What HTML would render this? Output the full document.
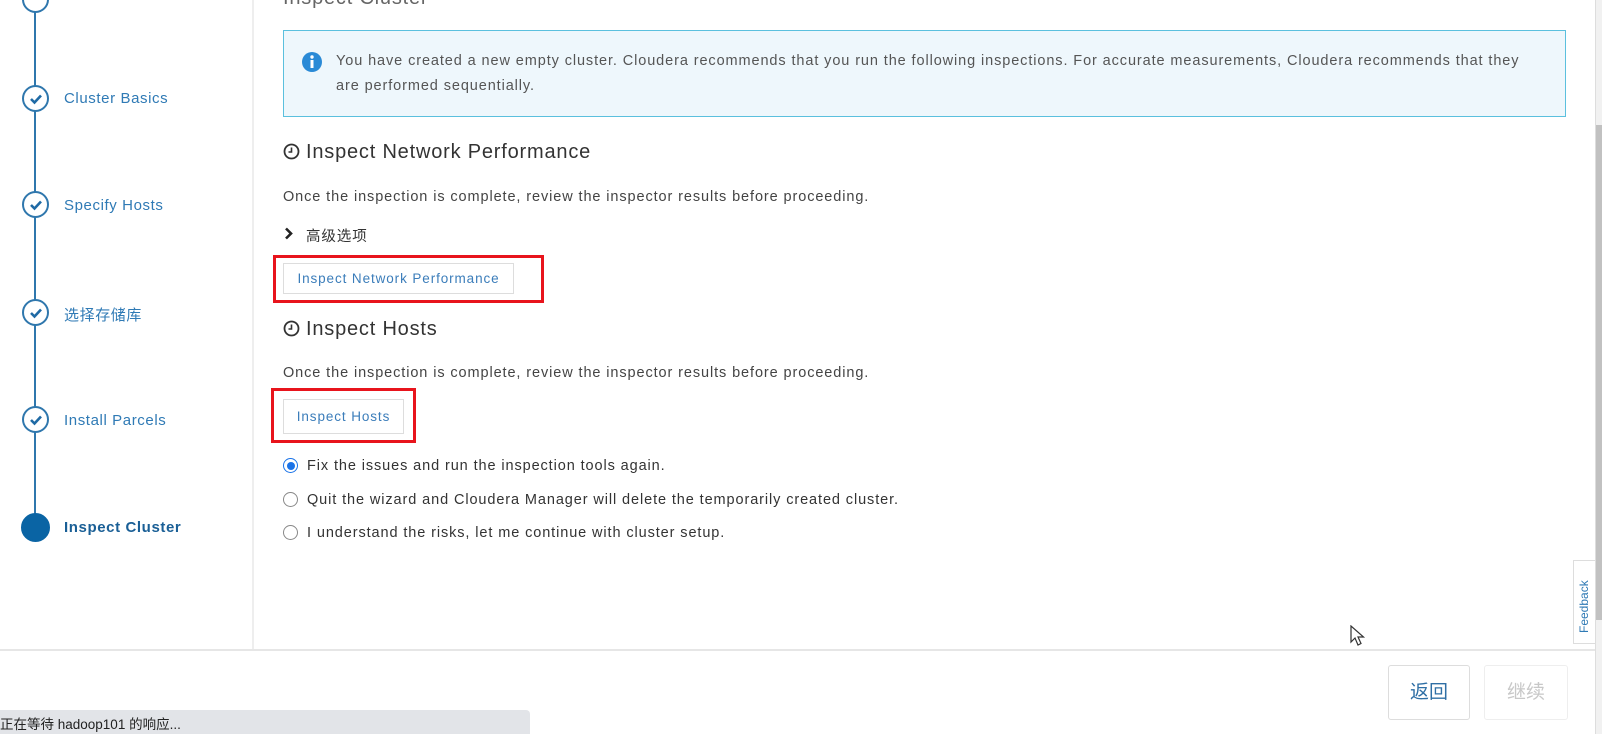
<!DOCTYPE html>
<html><head><meta charset="utf-8"><style>
*{margin:0;padding:0;box-sizing:border-box}
body{width:1602px;height:734px;overflow:hidden;background:#fff;font-family:"Liberation Sans","Noto Sans CJK SC",sans-serif;position:relative;color:#444}
.a{position:absolute;white-space:nowrap}
.line{position:absolute;left:34px;top:0;width:2px;height:527px;background:#2f77ad}
.c{position:absolute;left:22px;width:27px;height:27px;border-radius:50%;border:2px solid #2f77ad;background:#fff}
.c svg{position:absolute;left:5px;top:6px}
.lbl{position:absolute;left:64px;font-size:15px;color:#2f7ab5;letter-spacing:0.6px}
.btn{position:absolute;border:1px solid #ddd;background:#fff;color:#3b7dba;font-size:13.5px;text-align:center;letter-spacing:0.9px}
.red{position:absolute;border:3px solid #e8141c}
.p{font-size:14.5px;color:#444;letter-spacing:0.9px}
.h{font-size:20px;color:#333;letter-spacing:0.8px}
.radio{position:absolute;left:283px;width:15px;height:15px;border-radius:50%;border:1px solid #888;background:#fff}
</style></head><body>
<div class="line"></div>
<div class="c" style="top:-14px"></div>
<div class="c" style="top:85px"><svg width="14" height="12" viewBox="0 0 14 12"><path d="M2 6l3.5 3.5L12 2.5" stroke="#1f6aa5" stroke-width="2.6" fill="none"/></svg></div>
<div class="c" style="top:191px"><svg width="14" height="12" viewBox="0 0 14 12"><path d="M2 6l3.5 3.5L12 2.5" stroke="#1f6aa5" stroke-width="2.6" fill="none"/></svg></div>
<div class="c" style="top:299px"><svg width="14" height="12" viewBox="0 0 14 12"><path d="M2 6l3.5 3.5L12 2.5" stroke="#1f6aa5" stroke-width="2.6" fill="none"/></svg></div>
<div class="c" style="top:406px"><svg width="14" height="12" viewBox="0 0 14 12"><path d="M2 6l3.5 3.5L12 2.5" stroke="#1f6aa5" stroke-width="2.6" fill="none"/></svg></div>
<div class="c" style="top:513px;background:#0a64a4;border-color:#0a64a4;width:29px;height:29px;left:21px"></div>
<div class="lbl" style="top:90px">Cluster Basics</div>
<div class="lbl" style="top:197px">Specify Hosts</div>
<div class="lbl" style="top:304px">选择存储库</div>
<div class="lbl" style="top:412px">Install Parcels</div>
<div class="lbl" style="top:519px;font-weight:bold;color:#1a5f96">Inspect Cluster</div>
<div style="position:absolute;left:252px;top:0;width:2px;height:650px;background:#eee"></div>

<div class="a h" style="left:283px;top:-13px;color:#666">Inspect Cluster</div>
<div style="position:absolute;left:283px;top:30px;width:1283px;height:87px;background:#eef7fc;border:1px solid #5bc0de"></div>
<svg class="a" style="left:302px;top:52px" width="20" height="20" viewBox="0 0 20 20"><circle cx="10" cy="10" r="10" fill="#2a8ad6"/><rect x="8.5" y="8" width="3" height="8" fill="#fff"/><circle cx="10" cy="5" r="1.7" fill="#fff"/></svg>
<div class="a p" style="left:336px;top:53px;color:#555">You have created a new empty cluster. Cloudera recommends that you run the following inspections. For accurate measurements, Cloudera recommends that they</div>
<div class="a p" style="left:336px;top:78px;color:#555">are performed sequentially.</div>

<svg class="a" style="left:283px;top:143px" width="17" height="17" viewBox="0 0 17 17"><circle cx="8.5" cy="8.5" r="7" stroke="#333" stroke-width="1.8" fill="none"/><path d="M8.5 4.5v4.5H5.5" stroke="#333" stroke-width="1.6" fill="none"/></svg>
<div class="a h" style="left:306px;top:141px">Inspect Network Performance</div>
<div class="a p" style="left:283px;top:189px">Once the inspection is complete, review the inspector results before proceeding.</div>
<svg class="a" style="left:284px;top:227px" width="10" height="13" viewBox="0 0 10 13"><path d="M2 1.5l5 5-5 5" stroke="#222" stroke-width="2.6" fill="none"/></svg>
<div class="a p" style="left:306px;top:225px;color:#333">高级选项</div>
<div class="red" style="left:273px;top:255px;width:271px;height:48px"></div>
<div class="btn" style="left:283px;top:263px;width:231px;height:31px;line-height:29px">Inspect Network Performance</div>

<svg class="a" style="left:283px;top:320px" width="17" height="17" viewBox="0 0 17 17"><circle cx="8.5" cy="8.5" r="7" stroke="#333" stroke-width="1.8" fill="none"/><path d="M8.5 4.5v4.5H5.5" stroke="#333" stroke-width="1.6" fill="none"/></svg>
<div class="a h" style="left:306px;top:318px">Inspect Hosts</div>
<div class="a p" style="left:283px;top:365px">Once the inspection is complete, review the inspector results before proceeding.</div>
<div class="red" style="left:271px;top:388px;width:145px;height:55px"></div>
<div class="btn" style="left:283px;top:399px;width:121px;height:35px;line-height:33px">Inspect Hosts</div>

<div class="radio" style="top:458px;border:1px solid #1a73e8"><div style="position:absolute;left:2.5px;top:2.5px;width:8px;height:8px;border-radius:50%;background:#1a73e8"></div></div>
<div class="a p" style="left:307px;top:458px;color:#333">Fix the issues and run the inspection tools again.</div>
<div class="radio" style="top:492px"></div>
<div class="a p" style="left:307px;top:492px;color:#333">Quit the wizard and Cloudera Manager will delete the temporarily created cluster.</div>
<div class="radio" style="top:525px"></div>
<div class="a p" style="left:307px;top:525px;color:#333">I understand the risks, let me continue with cluster setup.</div>

<div style="position:absolute;left:0;top:649px;width:1595px;height:2px;background:#e6e6e6"></div>
<div style="position:absolute;left:1573px;top:560px;width:23px;height:84px;border:1px solid #ddd;border-right:none;background:#fff"></div>
<div class="a" style="left:1575px;top:633px;transform:rotate(-90deg);transform-origin:0 0;font-size:12px;color:#2f7ab5;line-height:18px">Feedback</div>
<div class="btn" style="left:1388px;top:665px;width:82px;height:55px;line-height:53px;font-size:19px;border-radius:3px;color:#2f6fa5;letter-spacing:0">返回</div>
<div class="btn" style="left:1484px;top:665px;width:84px;height:55px;line-height:53px;font-size:19px;border-radius:3px;color:#c8c8c8;border-color:#eee;letter-spacing:0">继续</div>
<div style="position:absolute;left:1595px;top:0;width:7px;height:734px;background:#f1f1f1;border-left:1px solid #ddd"></div>
<div style="position:absolute;left:1596px;top:125px;width:6px;height:495px;background:#c1c1c1"></div>
<svg class="a" style="left:1350px;top:625px" width="16" height="22" viewBox="0 0 16 22"><path d="M1 1v16l4-4 3 7 3-1.5-3-6.5h5.5z" fill="#fff" stroke="#333" stroke-width="1.2"/></svg>
<div style="position:absolute;left:0;top:710px;width:530px;height:24px;background:#e2e4e8;border-radius:0 4px 0 0"></div>
<div class="a" style="left:0;top:713px;font-size:13.5px;color:#222">正在等待 hadoop101 的响应...</div>
</body></html>
